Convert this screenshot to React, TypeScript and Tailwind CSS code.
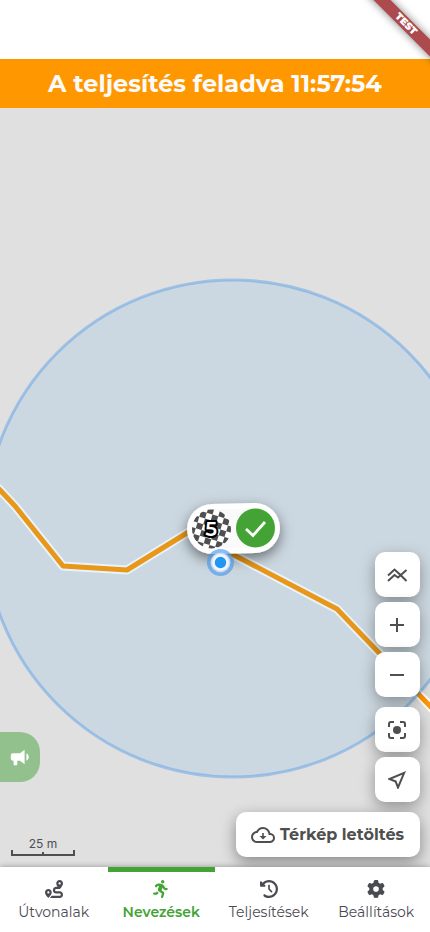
import type { ReactNode } from 'react';
import { FaClockRotateLeft, FaGear, FaPersonRunning, FaRoute } from 'react-icons/fa6';
import { MdAdd, MdOutlineNearMe, MdRemove } from 'react-icons/md';

const ROUTE =
  'M-10 372 L0 382 L15 398 L63 458 L127 462 L195 420 L232 446 L337 501 L383 549 L430 598 L440 609';

function MapCanvas() {
  return (
    <svg
      className="absolute inset-0 h-full w-full"
      viewBox="0 0 430 759"
      preserveAspectRatio="xMidYMid slice"
      role="img"
      aria-label="Térkép"
    >
      <defs>
        <pattern id="checker" width="12" height="12" patternUnits="userSpaceOnUse" patternTransform="translate(209 418) rotate(17)">
          <rect width="12" height="12" fill="#fff" />
          <rect width="6" height="6" fill="#4f4f4f" />
          <rect x="6" y="6" width="6" height="6" fill="#4f4f4f" />
        </pattern>
        <filter id="pillShadow" x="-30%" y="-30%" width="160%" height="190%">
          <feDropShadow dx="0" dy="5" stdDeviation="7" floodColor="#000" floodOpacity="0.5" />
        </filter>
      </defs>
      <g fill="none" strokeLinejoin="round">
        <path d={ROUTE} stroke="#fff" strokeWidth="9" />
        <path d={ROUTE} stroke="#ff9800" strokeWidth="5" />
      </g>
      <circle cx="233" cy="420.5" r="248.5" fill="#2192ee" fillOpacity="0.1" stroke="#378fe9" strokeOpacity="0.38" strokeWidth="3" />
      <g filter="url(#pillShadow)">
        <path d="M212 396 L255 395 A25 25 0 0 1 255 445 L212 446 A25 25 0 0 1 212 396Z" fill="#fff" />
      </g>
      <rect x="212" y="401" width="43" height="39" fill="#fafafa" />
      <circle cx="211.5" cy="421" r="19.5" fill="url(#checker)" />
      <text
        x="211"
        y="428"
        textAnchor="middle"
        fill="#fff"
        stroke="#000"
        strokeWidth="4"
        strokeLinejoin="round"
        paintOrder="stroke"
        className="font-[Montserrat,Inter,sans-serif] text-[20px] font-semibold"
      >
        5
      </text>
      <circle cx="255.5" cy="420" r="19.5" fill="#43a335" />
      <path d="M246 421 L253 427.5 L265 414" fill="none" stroke="#fff" strokeWidth="2.8" />
      <circle cx="220.5" cy="454.5" r="13.5" fill="#4a98e8" fillOpacity="0.65" />
      <circle cx="220.5" cy="454.5" r="10" fill="#c4d9f2" />
      <circle cx="220.5" cy="454.5" r="8.5" fill="#f2f6fc" />
      <circle cx="220.5" cy="454.5" r="5.7" fill="#2196f3" />
    </svg>
  );
}

function TrackIcon() {
  return (
    <svg width="24" height="24" viewBox="0 0 24 24" fill="none" stroke="currentColor" strokeWidth="2">
      <path d="M3 12.5 L9.500 6.500 L15 11.500 L21.500 18 M3 18 L9.500 12 L13 14.500 L21.500 7" />
    </svg>
  );
}

function FocusIcon() {
  return (
    <svg width="24" height="24" viewBox="0 0 24 24" fill="none" stroke="currentColor" strokeWidth="2">
      <path d="M4 9V6a2 2 0 0 1 2-2h3M15 4h3a2 2 0 0 1 2 2v3M20 15v3a2 2 0 0 1-2 2h-3M9 20H6a2 2 0 0 1-2-2v-3" />
      <circle cx="12" cy="12" r="4" fill="currentColor" stroke="none" />
    </svg>
  );
}

function CloudIcon() {
  return (
    <svg width="24" height="24" viewBox="0 0 24 24" fill="currentColor">
      <path d="M19.35 10.04A7.49 7.49 0 0 0 12 4C9.11 4 6.6 5.64 5.35 8.04A5.994 5.994 0 0 0 0 14c0 3.31 2.69 6 6 6h13c2.76 0 5-2.24 5-5 0-2.64-2.05-4.78-4.65-4.96zM19 18H6c-2.21 0-4-1.79-4-4 0-2.05 1.53-3.76 3.56-3.97l1.07-.11.5-.95A5.469 5.469 0 0 1 12 6c2.62 0 4.88 1.86 5.39 4.43l.3 1.5 1.53.11A2.98 2.98 0 0 1 22 15c0 1.65-1.35 3-3 3z" />
      <path d="M11.2 10h1.6v3h2.7L12 16.5 8.5 13h2.7z" />
    </svg>
  );
}

function HornIcon() {
  return (
    <svg width="22" height="22" viewBox="0 0 24 24" fill="currentColor">
      <path d="M12 8H4a2 2 0 0 0-2 2v4a2 2 0 0 0 2 2h1v4a1 1 0 0 0 1 1h2a1 1 0 0 0 1-1v-4h3l5 4V4l-5 4m9.5 4c0 1.71-.96 3.26-2.5 4V8c1.53.75 2.5 2.3 2.5 4" />
    </svg>
  );
}

function MapButton({ label, children }: { label: string; children: ReactNode }) {
  return (
    <button
      type="button"
      aria-label={label}
      className="flex size-[45px] items-center justify-center rounded-[10px] bg-white pr-px shadow-[0_5px_15px_rgba(0,0,0,0.35)]"
    >
      {children}
    </button>
  );
}

const TABS = [
  { label: 'Útvonalak', icon: <FaRoute size={18} />, active: false },
  { label: 'Nevezések', icon: <FaPersonRunning size={18} />, active: true },
  { label: 'Teljesítések', icon: <FaClockRotateLeft size={18} />, active: false },
  { label: 'Beállítások', icon: <FaGear size={18} />, active: false },
];

export default function App() {
  return (
    <div className="relative flex h-screen flex-col overflow-hidden bg-white font-[Montserrat,Inter,sans-serif] text-[#4f4f4f]">
      <div className="h-[59px] shrink-0" />
      <div className="absolute top-[18px] -right-[26px] z-10 h-3 w-[100px] rotate-45 bg-[#ad4a4e] text-center text-[10px] leading-3 font-black text-white shadow-[0_0_8px_rgba(0,0,0,0.5)]">
        TEST
      </div>
      <h1 className="shrink-0 bg-[#ff9800] text-center text-2xl leading-[49px] font-bold text-[#fafafa]">
        A teljesítés feladva 11:57:54
      </h1>

      <main className="relative min-h-0 flex-1 overflow-hidden bg-[#e0e0e0]">
        <MapCanvas />

        <button
          type="button"
          aria-label="Hangosbemondó"
          className="absolute bottom-[85px] left-0 flex h-[50px] w-10 items-center justify-center rounded-r-[20px] bg-[#93c18d] text-white"
        >
          <HornIcon />
        </button>

        <div className="absolute bottom-[11px] left-[11px] w-16 text-center font-[Inter,sans-serif] text-xs leading-3">
          25 m
          <div className="flex h-[6px] items-end border-x-2 border-b-2 border-[#4f4f4f]">
            <div className="mx-auto h-[2px] w-[2px] bg-[#4f4f4f]" />
          </div>
        </div>

        <div className="absolute right-[10px] bottom-[10px] flex flex-col items-end gap-[10px]">
          <div className="flex flex-col gap-[5px]">
            <MapButton label="Magassági profil"><TrackIcon /></MapButton>
            <MapButton label="Nagyítás"><MdAdd size={24} /></MapButton>
            <MapButton label="Kicsinyítés"><MdRemove size={24} /></MapButton>
          </div>
          <div className="flex flex-col gap-[5px]">
            <MapButton label="Középre"><FocusIcon /></MapButton>
            <MapButton label="Saját pozíció"><MdOutlineNearMe size={24} /></MapButton>
          </div>
          <button
            type="button"
            className="flex h-[45px] items-center gap-[5px] rounded-[10px] bg-white pr-4 pl-[15px] text-base font-bold shadow-[0_5px_15px_rgba(0,0,0,0.4)]"
          >
            <CloudIcon />
            Térkép letöltés
          </button>
        </div>
      </main>

      <nav className="relative grid h-[65px] shrink-0 grid-cols-4 bg-white shadow-[0_0_6px_rgba(0,0,0,0.35)]">
        {TABS.map((tab) => (
          <a
            key={tab.label}
            href="#"
            aria-current={tab.active ? 'page' : undefined}
            className={
              tab.active
                ? 'flex flex-col items-center border-t-[5px] border-[#43a335] pt-2 text-sm leading-7 font-semibold text-[#43a335]'
                : 'flex flex-col items-center border-t-[5px] border-transparent pt-2 text-sm leading-7 text-[#4a4a52]'
            }
          >
            {tab.icon}
            <span>{tab.label}</span>
          </a>
        ))}
      </nav>
    </div>
  );
}
